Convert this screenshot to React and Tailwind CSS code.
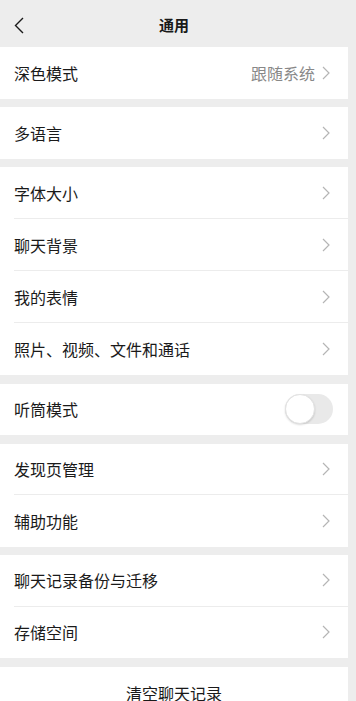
import React from "react";

const Chevron = () => (
  <svg width="8" height="14" viewBox="0 0 8 14" className="shrink-0">
    <path d="M1 1l6 6-6 6" fill="none" stroke="#b5b5b5" strokeWidth="1.2" />
  </svg>
);

const Row = ({ label, value, toggle, last, tall }) => (
  <div className={`flex items-center pl-[14px] ${tall ? "h-[52px]" : "h-[51.5px]"}`}>
    <div className={`flex h-full flex-1 items-center ${last ? "" : "border-b border-[#ececec]"}`}>
      <span className="flex-1 text-[16px] text-[#1a1a1a]">{label}</span>
      {value && <span className="mr-[7px] text-[16px] text-[#888888]">{value}</span>}
      {toggle ? (
        <div className="relative mr-[15px] h-[30px] w-[48px] rounded-full bg-[#e9e9e9]">
          <div className="absolute left-0 top-0 h-[30px] w-[30px] rounded-full border border-[#e2e2e2] bg-white shadow-[0_1px_2px_rgba(0,0,0,0.15)]" />
        </div>
      ) : (
        <span className="mr-[18px] flex">
          <Chevron />
        </span>
      )}
    </div>
  </div>
);

const Group = ({ items, tall }) => (
  <div className="mb-[8.5px] bg-white">
    {items.map((it, i) => (
      <Row key={it.label} {...it} tall={tall} last={i === items.length - 1} />
    ))}
  </div>
);

const App = () => {
  const groups = [
    { items: [{ label: "深色模式", value: "跟随系统" }] },
    { items: [{ label: "多语言" }] },
    {
      tall: true,
      items: [
        { label: "字体大小" },
        { label: "聊天背景" },
        { label: "我的表情" },
        { label: "照片、视频、文件和通话" },
      ],
    },
    { items: [{ label: "听筒模式", toggle: true }] },
    { items: [{ label: "发现页管理" }, { label: "辅助功能" }] },
    { items: [{ label: "聊天记录备份与迁移" }, { label: "存储空间" }] },
  ];

  return (
    <div
      className="h-[701px] w-[356px] overflow-hidden bg-[#ededed]"
      style={{ fontFamily: '"Noto Sans CJK SC", "Noto Sans", sans-serif' }}
    >
      <div className="w-[348px]">
        <div className="relative flex h-[47px] items-center justify-center pt-[3px]">
          <svg width="10" height="17" viewBox="0 0 10 17" className="absolute left-[14px] top-[17px]">
            <path d="M9 1L1.5 8.5 9 16" fill="none" stroke="#1a1a1a" strokeWidth="1.4" />
          </svg>
          <span className="text-[15px] font-semibold text-[#1a1a1a]">通用</span>
        </div>
        {groups.map((g, i) => (
          <Group key={i} items={g.items} tall={g.tall} />
        ))}
        <div className="flex h-[52px] items-center justify-center bg-white">
          <span className="text-[16px] text-[#1a1a1a]">清空聊天记录</span>
        </div>
      </div>
    </div>
  );
};

export default App;
